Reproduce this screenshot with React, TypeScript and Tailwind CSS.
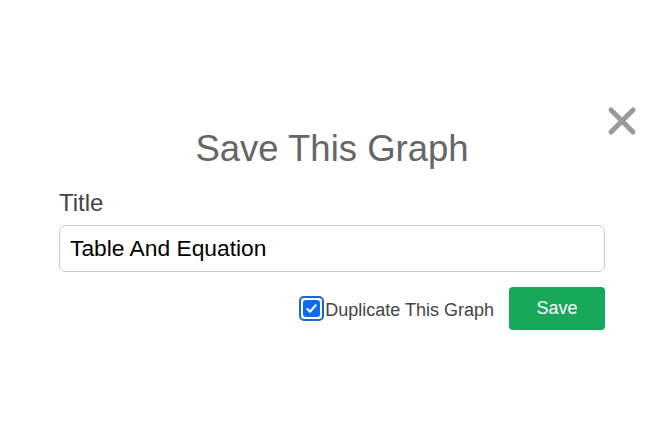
import React from 'react';

export default function App() {
  return (
    <div className="relative w-full h-[445px] bg-white font-['Liberation_Sans',Arial,sans-serif] overflow-hidden">
      {/* close button */}
      <button className="absolute left-[607px] top-[106px] w-[30px] h-[30px] flex items-center justify-center">
        <svg width="30" height="30" viewBox="0 0 30 30">
          <path d="M4 4 L26 26 M26 4 L4 26" stroke="#9a9a9a" strokeWidth="5" strokeLinecap="round" />
        </svg>
      </button>

      <div className="ml-[59px] w-[546px] pt-[128px] flex flex-col">
        <h1 className="text-[36.5px] leading-[42px] text-center text-[#666]">Save This Graph</h1>

        <label className="mt-[19px] text-[24px] leading-[27px] text-[#444]">Title</label>

        <div className="mt-[9px] h-[47px] rounded-[6px] border border-[#cccccc] flex items-center px-[10px] text-[22.8px] text-black">
          Table And Equation
        </div>

        <div className="mt-[15px] flex items-center justify-end">
          <div className="w-[25px] h-[25px] rounded-[5px] border-2 border-[#1b66d2] p-[2px] bg-white">
            <div className="w-full h-full rounded-[3px] bg-[#0b6cf2] flex items-center justify-center">
              <svg width="13" height="13" viewBox="0 0 14 14">
                <path d="M2.5 7.5 L5.5 10.5 L11.5 3.5" fill="none" stroke="white" strokeWidth="2.2" strokeLinecap="round" strokeLinejoin="round" />
              </svg>
            </div>
          </div>
          <span className="ml-[1px] mt-[4px] text-[18px] text-[#444]">Duplicate This Graph</span>
          <button className="ml-[15px] w-[96px] h-[43px] rounded-[4px] bg-[#17a85b] text-white text-[18px]">Save</button>
        </div>
      </div>
    </div>
  );
}
